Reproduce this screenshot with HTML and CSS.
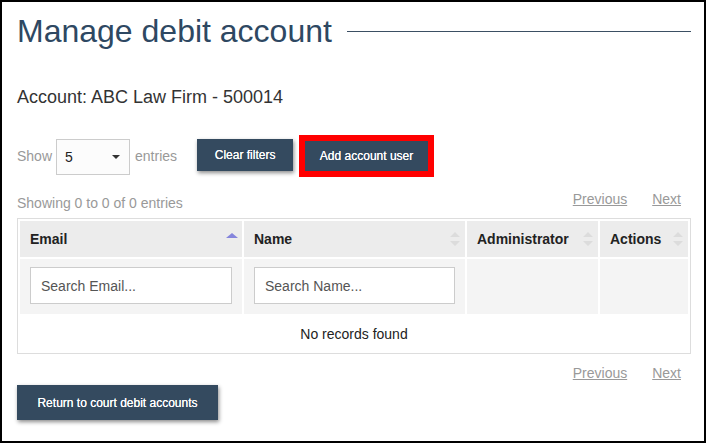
FILE: index.html
```html
<!DOCTYPE html>
<html>
<head>
	<meta charset="UTF-8">
	<meta name="viewport" content="width=device-width, initial-scale=1.0">
	<title>Manage debit account</title>
<link rel="stylesheet" href="styles.css">
</head>
<body>
	<div class="page">
	<div class="title-row">
		<h1>Manage debit account</h1>
		<div class="title-line"></div>
	</div>

	<p class="account">Account: ABC Law Firm - 500014</p>

	<div class="toolbar">
		<span class="muted">Show</span>
		<div class="select-box">
			<span>5</span>
			<svg width="8" height="4" viewBox="0 0 8 4"><path d="M0 0 L8 0 L4 4 Z" fill="#333"/></svg>
		</div>
		<span class="muted">entries</span>
		<button type="button" class="button clear-button">Clear filters</button>
		<button type="button" class="button add-button">Add account user</button>
	</div>

	<div class="info-row">
		<span class="muted info">Showing 0 to 0 of 0 entries</span>
		<div class="pager">
			<a href="#">Previous</a>
			<a href="#">Next</a>
		</div>
	</div>

	<table class="users">
		<colgroup>
			<col style="width: 222px">
			<col style="width: 221px">
			<col style="width: 131px">
			<col style="width: 88px">
		</colgroup>
		<thead>
		<tr>
			<th><div class="th-inner">Email
				<svg width="12" height="16" viewBox="0 0 12 16"><path d="M0 7 L6 2 L12 7 Z" fill="#8585dc"/></svg>
			</div></th>
			<th><div class="th-inner">Name
				<svg width="12" height="16" viewBox="0 0 12 16"><path d="M1 6 L6 1 L11 6 Z M1 10 L6 15 L11 10 Z" fill="#dcdcdc"/></svg>
			</div></th>
			<th><div class="th-inner">Administrator
				<svg width="12" height="16" viewBox="0 0 12 16"><path d="M1 6 L6 1 L11 6 Z M1 10 L6 15 L11 10 Z" fill="#dcdcdc"/></svg>
			</div></th>
			<th><div class="th-inner">Actions
				<svg width="12" height="16" viewBox="0 0 12 16"><path d="M1 6 L6 1 L11 6 Z M1 10 L6 15 L11 10 Z" fill="#dcdcdc"/></svg>
			</div></th>
		</tr>
		<tr class="filters">
			<td><input type="text" class="search" placeholder="Search Email..."></td>
			<td><input type="text" class="search" placeholder="Search Name..."></td>
			<td></td>
			<td></td>
		</tr>
		</thead>
		<tbody>
		<tr>
			<td colspan="4" class="empty">No records found</td>
		</tr>
		</tbody>
	</table>

	<div class="pager bottom-pager">
		<a href="#">Previous</a>
		<a href="#">Next</a>
	</div>

	<button type="button" class="button return-button">Return to court debit accounts</button>
	</div>
</body>
</html>
```

FILE: styles.css
```css
html, body {
	margin: 0;
}
body {
	width: 706px;
	height: 443px;
	box-sizing: border-box;
	border: 2px solid black;
	overflow: hidden;
	font-family: "Liberation Sans", Arial, sans-serif;
	color: #222;
	background: white;
}
.page {
	padding: 0 13px 0 15px;
}
.title-row {
	display: flex;
	align-items: center;
	margin-top: 11px;
}
h1 {
	margin: 0;
	font-size: 32px;
	font-weight: normal;
	line-height: 36px;
	color: #2e4862;
}
.title-line {
	flex: 1;
	height: 1px;
	margin-left: 15px;
	background: #3b4f63;
}
.account {
	margin: 38px 0 0;
	font-size: 18px;
	line-height: 20px;
	color: #333;
}
.toolbar {
	display: flex;
	align-items: center;
	height: 42px;
	margin-top: 28px;
	font-size: 14px;
}
.muted {
	color: #999;
	font-size: 14px;
}
.select-box {
	display: flex;
	align-items: center;
	justify-content: space-between;
	width: 74px;
	height: 36px;
	margin: 2px 5px 0 4px;
	padding: 0 9px 0 8px;
	box-sizing: border-box;
	border: 1px solid #ccc;
	background: #fcfcfc;
	color: #222;
	font-size: 14px;
}
.button {
	font-family: "Liberation Sans", Arial, sans-serif;
	font-size: 12px;
	color: white;
	background-color: #344a5f;
	border: none;
	box-shadow: 1px 2px 4px rgba(0, 0, 0, 0.45);
	text-shadow: 0 0 0.4px white;
	cursor: pointer;
}
.clear-button {
	width: 96px;
	height: 32px;
	margin: 0 0 2px 20px;
}
.add-button {
	width: 135px;
	height: 42px;
	margin-left: 6px;
	border: 6px solid #f00;
	box-shadow: none;
}
.info-row {
	display: flex;
	justify-content: space-between;
	align-items: flex-start;
	margin-top: 12px;
	height: 24px;
}
.info {
	padding-top: 4px;
	line-height: 20px;
}
.pager {
	display: flex;
	justify-content: flex-end;
	gap: 25px;
	padding-right: 10px;
	line-height: 20px;
	font-size: 14px;
}
.pager a {
	color: #999;
	text-decoration: underline;
}
.users {
	width: 674px;
	margin-top: 5px;
	border: 1px solid #ddd;
	border-collapse: separate;
	border-spacing: 2px;
	table-layout: fixed;
	font-size: 14px;
}
.users th {
	height: 36px;
	padding: 0 4px 0 10px;
	box-sizing: border-box;
	background: #ececec;
	text-align: left;
	font-weight: bold;
	color: #222;
}
.th-inner {
	display: flex;
	justify-content: space-between;
	align-items: center;
}
.filters td {
	height: 55px;
	padding: 8px 10px 10px;
	box-sizing: border-box;
	background: #f4f4f4;
}
.search {
	display: block;
	width: 100%;
	height: 37px;
	padding: 0 10px;
	box-sizing: border-box;
	border: 1px solid #ccc;
	outline: none;
	font-family: "Liberation Sans", Arial, sans-serif;
	font-size: 14px;
	background: white;
}
.search::placeholder {
	color: #555;
}
.empty {
	height: 35px;
	padding: 0;
	text-align: center;
	color: #222;
}
.bottom-pager {
	margin-top: 9px;
}
.return-button {
	display: block;
	width: 201px;
	height: 35px;
	margin-top: 2px;
}
```
